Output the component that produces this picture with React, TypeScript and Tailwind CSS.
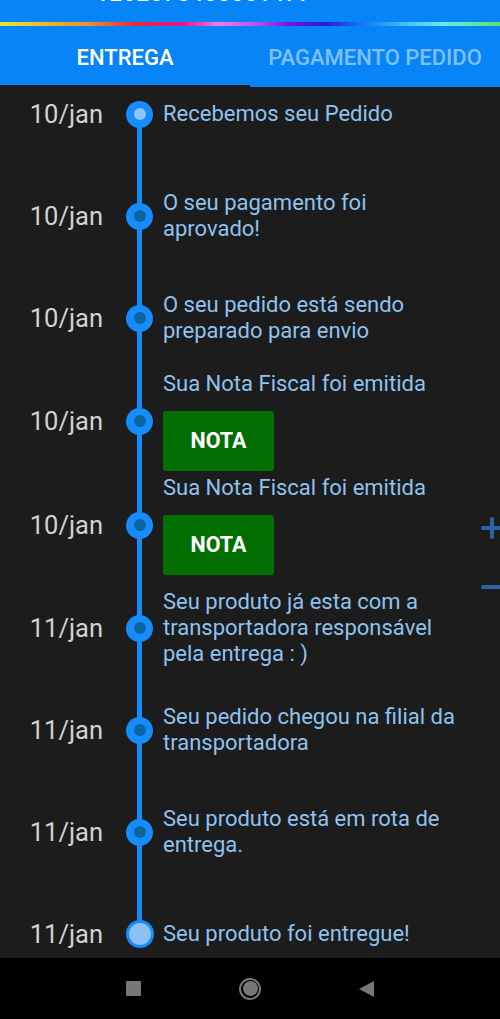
import React from 'react';

type Step = {
  date: string;
  lines: string[];
  nota?: boolean;
  dot: 'first' | 'mid' | 'last';
  h: string;
};

const steps: Step[] = [
  { date: '10/jan', lines: ['Recebemos seu Pedido'], dot: 'first', h: 'h-[102px]' },
  { date: '10/jan', lines: ['O seu pagamento foi', 'aprovado!'], dot: 'mid', h: 'h-[102px]' },
  { date: '10/jan', lines: ['O seu pedido está sendo', 'preparado para envio'], dot: 'mid', h: 'h-[102px]' },
  { date: '10/jan', lines: ['Sua Nota Fiscal foi emitida'], nota: true, dot: 'mid', h: 'h-[104px]' },
  { date: '10/jan', lines: ['Sua Nota Fiscal foi emitida'], nota: true, dot: 'mid', h: 'h-[104px]' },
  { date: '11/jan', lines: ['Seu produto já esta com a', 'transportadora responsável', 'pela entrega : )'], dot: 'mid', h: 'h-[102px]' },
  { date: '11/jan', lines: ['Seu pedido chegou na filial da', 'transportadora'], dot: 'mid', h: 'h-[102px]' },
  { date: '11/jan', lines: ['Seu produto está em rota de', 'entrega.'], dot: 'mid', h: 'h-[102px]' },
  { date: '11/jan', lines: ['Seu produto foi entregue!'], dot: 'last', h: 'h-[102px]' },
];

const Dot = ({ kind }: { kind: Step['dot'] }) => {
  if (kind === 'last') {
    return <div className="w-[28px] h-[28px] rounded-full bg-[#8cc1f6] border-[3px] border-[#168bfa]" />;
  }
  return (
    <div className="w-[27px] h-[27px] rounded-full bg-[#168bfa] flex items-center justify-center">
      <div className={kind === 'first' ? 'w-[12px] h-[12px] rounded-full bg-[#8ec4f6]' : 'w-[12px] h-[12px] rounded-full bg-[#0b669f]'} />
    </div>
  );
};

const Row = ({ step }: { step: Step }) => (
  <div className={`flex items-stretch ${step.h}`}>
    {/* date */}
    <div className="w-[126px] flex items-center justify-end pr-[23px]">
      <span className="text-[25.5px] text-[#d2d2d2]">{step.date}</span>
    </div>
    {/* line + dot */}
    <div className="relative w-[27px] flex items-center justify-center">
      <div
        className={
          step.dot === 'first'
            ? 'absolute left-[11px] w-[5px] top-1/2 bottom-0 bg-[#168bfa]'
            : step.dot === 'last'
            ? 'absolute left-[11px] w-[5px] top-0 h-1/2 bg-[#168bfa]'
            : 'absolute left-[11px] w-[5px] top-0 bottom-0 bg-[#168bfa]'
        }
      />
      <div className="relative">
        <Dot kind={step.dot} />
      </div>
    </div>
    {/* content */}
    <div className="flex-1 flex flex-col justify-center pl-[10px]">
      {step.lines.map((l, i) => (
        <div key={i} className="text-[22px] leading-[26px] text-[#8fc2ef] whitespace-nowrap">
          {l}
        </div>
      ))}
      {step.nota && (
        <button className="mt-[14px] w-[111px] h-[60px] rounded-[3px] bg-[#036f03] text-white text-[21.5px] font-bold">
          NOTA
        </button>
      )}
    </div>
  </div>
);

export default function App() {
  return (
    <div className="w-[500px] h-[1019px] bg-[#1c1c1c] flex flex-col overflow-hidden" style={{ fontFamily: 'Roboto, "Noto Sans", sans-serif' }}>
      {/* app bar (scrolled away) */}
      <div className="relative h-[22px] bg-[#0785f7] overflow-hidden">
        <div className="absolute left-[33px] top-[-17px] text-white text-[22px] leading-[22px]">←</div>
        <div className="absolute left-[96px] top-[-17px] text-white text-[22px] leading-[22px] font-medium tracking-[1px]">1202070400051477</div>
      </div>
      {/* rainbow line */}
      <div className="h-[4px] bg-[linear-gradient(90deg,#e8e33a_0%,#f08a2a_18%,#e82a3a_27%,#e8128a_36%,#f07ae8_44%,#b04af0_52%,#7a10e8_58%,#2a18d8_65%,#1a6ef8_72%,#3ab8f8_80%,#6ae8f0_88%,#5ae070_100%)]" />
      {/* tabs */}
      <div className="flex bg-[#0785f7] h-[59px] pt-[3px]">
        <div className="w-1/2 flex items-center justify-center text-white text-[22px] font-medium">ENTREGA</div>
        <div className="w-1/2 flex items-center justify-center text-[#7fc0f8] text-[22px] font-medium">PAGAMENTO PEDIDO</div>
      </div>
      <div className="flex h-[2px]">
        <div className="w-1/2 bg-[#1c1c1c]" />
        <div className="w-1/2 bg-[#0785f7]" />
      </div>

      {/* timeline (scrolled list) */}
      <div className="relative flex-1 overflow-hidden">
        <div className="-mt-[24px] flex flex-col">
          {steps.map((s, i) => (
            <Row key={i} step={s} />
          ))}
        </div>
        {/* zoom controls */}
        <div className="absolute left-[462px] top-[410px] flex flex-col">
          <div className="relative w-[60px] h-[60px] rounded-full border border-[#1f1f1f]">
            <div className="absolute left-[18px] top-[28px] w-[22px] h-[4px] rounded-full bg-[#2e62a8]" />
            <div className="absolute left-[27px] top-[19px] w-[4px] h-[22px] rounded-full bg-[#2e62a8]" />
          </div>
          <div className="relative w-[60px] h-[60px] rounded-full border border-[#1f1f1f]">
            <div className="absolute left-[18px] top-[27px] w-[22px] h-[4px] rounded-full bg-[#2e62a8]" />
          </div>
        </div>
      </div>

      {/* android nav bar */}
      <div className="h-[61px] bg-black flex items-center justify-center gap-[98px]">
        <div className="w-[15px] h-[15px] bg-[#777] rounded-[1px]" />
        <div className="w-[22px] h-[22px] rounded-full border-[2px] border-[#777] flex items-center justify-center">
          <div className="w-[15px] h-[15px] rounded-full bg-[#777]" />
        </div>
        <svg width="15" height="16" viewBox="0 0 15 16">
          <path d="M15 0 L15 16 L0 8 Z" fill="#777" />
        </svg>
      </div>
    </div>
  );
}
